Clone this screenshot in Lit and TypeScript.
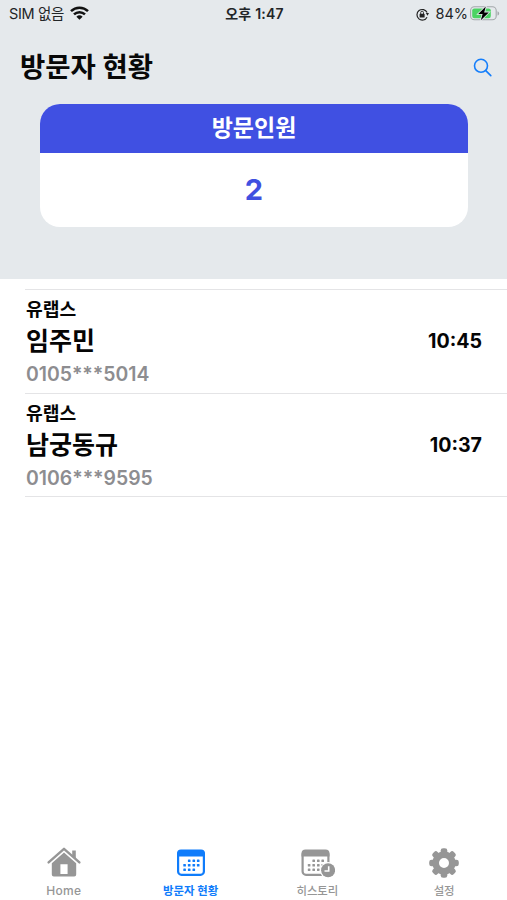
import { LitElement, html, css, svg } from "lit";
import { customElement, property } from "lit/decorators.js";

interface Visit {
  company: string;
  name: string;
  phone: string;
  time: string;
}

const visits: Visit[] = [
  { company: "유랩스", name: "임주민", phone: "0105***5014", time: "10:45" },
  { company: "유랩스", name: "남궁동규", phone: "0106***9595", time: "10:37" },
];

const dots = [
  [13.2, 13.8], [17.8, 13.8], [22.2, 13.8],
  [8.6, 18.3], [13.2, 18.3], [17.8, 18.3], [22.2, 18.3],
  [8.6, 22.8], [13.2, 22.8], [17.8, 22.8],
].map(([x, y]) => svg`<rect x=${x - 1.3} y=${y - 1.3} width="2.6" height="2.6" rx=".6" fill="currentColor"/>`);

const calendar = svg`
  <rect x="2.1" y="4" width="25.8" height="23.8" rx="3.4" fill="none" stroke="currentColor" stroke-width="2.2"/>
  <path d="M1 9.4V6.4a4 4 0 0 1 4-4h20a4 4 0 0 1 4 4v3z" fill="currentColor"/>
  ${dots}`;

const icons: Record<string, unknown> = {
  home: html`<svg width="36" height="32" viewBox="0 0 36 32">
    <path d="M26.2 3.4h3.6v9l-3.6-3z" fill="currentColor"/>
    <path d="M2.6 15.4 18 1.8 33.4 15.4" fill="none" stroke="currentColor" stroke-width="2.4" stroke-linecap="round" stroke-linejoin="round"/>
    <path fill-rule="evenodd" d="M18 5.4 5.8 16.2v11.4a2 2 0 0 0 2 2h20.4a2 2 0 0 0 2-2V16.2zM14.4 17.2h7.2v9.8h-7.2z" fill="currentColor"/>
  </svg>`,
  calendar: html`<svg width="30" height="32" viewBox="0 0 30 32">${calendar}</svg>`,
  history: html`<svg width="36" height="32" viewBox="-1.5 0 36 32">${calendar}
    <circle cx="27.6" cy="23.3" r="8.3" fill="#fff"/>
    <circle cx="27.6" cy="23.3" r="7" fill="currentColor"/>
    <path d="M28.2 19.2v4.8h-4.2" fill="none" stroke="#fff" stroke-width="1.6"/>
  </svg>`,
  gear: html`<svg width="32" height="32" viewBox="-16 -16 32 32">
    ${[0, 45, 90, 135, 180, 225, 270, 315].map(
      (a) => svg`<rect x="-3.3" y="-14.8" width="6.6" height="8" rx="2.4" fill="currentColor" transform="rotate(${a})"/>`,
    )}
    <circle r="8.3" fill="none" stroke="currentColor" stroke-width="6.6"/>
  </svg>`,
};

@customElement("status-bar")
class StatusBar extends LitElement {
  static styles = css`
    :host {
      display: grid;
      grid-template-columns: 1fr auto 1fr;
      height: 28px;
      padding: 0 7px 0 9px;
      line-height: 28px;
      font-size: 14.5px;
      color: #222527;
      white-space: nowrap;
    }
    .side { display: flex; align-items: center; }
    .carrier { letter-spacing: -0.35px; }
    .wifi { margin: -2px 0 0 6px; }
    .end { justify-content: flex-end; }
    .clock { font-weight: 600; font-size: 14px; letter-spacing: 0.2px; }
    .lock { margin-right: 6px; }
    .battery { margin: -1px 0 0 2px; }
    svg { display: block; }
  `;
  render() {
    return html`
      <div class="side">
        <span class="carrier">SIM 없음</span>
        <svg class="wifi" width="19" height="14" viewBox="0 0 19 14">
          <g fill="none" stroke="#111" stroke-width="2.5">
            <path d="M1 5.1a12.2 12.2 0 0 1 17 0"/>
            <path d="M4 8.4a7.9 7.9 0 0 1 11 0"/>
          </g>
          <path d="M6.4 10.7a4.5 4.5 0 0 1 6.2 0L9.5 13.8z" fill="#111"/>
        </svg>
      </div>
      <div class="clock">오후 1:47</div>
      <div class="side end">
        <svg class="lock" width="13" height="13" viewBox="0 0 13 13">
          <path d="M11.1 4.6A5.3 5.3 0 1 0 11 9.2" fill="none" stroke="#222" stroke-width="1.2"/>
          <path d="M9.8 5.1h3.2l-1.5 2.6z" fill="#222"/>
          <rect x="3.6" y="5.8" width="5" height="3.8" rx=".6" fill="#222"/>
          <path d="M4.7 6V4.6a1.4 1.4 0 0 1 2.8 0V6" fill="none" stroke="#222" stroke-width=".9"/>
        </svg>
        <span>84%</span>
        <svg class="battery" width="30" height="15" viewBox="0 0 30 15">
          <rect x=".6" y=".8" width="25.6" height="13" rx="3.8" fill="none" stroke="#a3a8aa" stroke-width="1.1"/>
          <path d="M27.5 5.2a2.3 2.3 0 0 1 0 4.4z" fill="#a3a8aa"/>
          <rect x="2.2" y="2.4" width="18.6" height="9.8" rx="2.2" fill="#4bd363"/>
          <path d="M15.8.6 8.2 8h4.4L10.8 14.2 18.8 6.4h-4.6z" fill="#000" stroke="#e6eaec" stroke-width="1.6" paint-order="stroke"/>
        </svg>
      </div>
    `;
  }
}

@customElement("visit-row")
class VisitRow extends LitElement {
  @property({ attribute: false }) visit!: Visit;
  static styles = css`
    :host {
      display: flex;
      align-items: center;
      box-sizing: border-box;
      height: 103.7px;
      margin-left: 25px;
      padding-right: 25px;
      border-bottom: 1px solid #e4e4e6;
      color: #050505;
      font-weight: 700;
    }
    .who { flex: 1; padding: 1px 0 0 1px; }
    .company { font-size: 18.2px; line-height: 26px; }
    .name { font-size: 25px; line-height: 38px; }
    .phone {
      font-size: 19.4px;
      line-height: 28px;
      font-weight: 600;
      color: #8d8d90;
      font-feature-settings: "calt" 0;
    }
    .time { font-size: 19.6px; font-weight: 700; }
  `;
  render() {
    const v = this.visit;
    return html`
      <div class="who">
        <div class="company">${v.company}</div>
        <div class="name">${v.name}</div>
        <div class="phone">${v.phone}</div>
      </div>
      <div class="time">${v.time}</div>
    `;
  }
}

@customElement("tab-item")
class TabItem extends LitElement {
  @property() icon = "";
  @property() label = "";
  @property({ type: Boolean, reflect: true }) active = false;
  static styles = css`
    :host {
      display: flex;
      flex-direction: column;
      align-items: center;
      color: #969696;
      font-size: 11.4px;
      font-weight: 500;
      padding-left: 1px;
    }
    :host([active]) { color: #0f7cfb; font-weight: 700; }
    .label { line-height: 20px; margin-top: 2px; }
    .home { font-size: 12px; letter-spacing: 0.3px; }
    svg { display: block; }
  `;
  render() {
    return html`${icons[this.icon]}<span class="label ${this.icon}">${this.label}</span>`;
  }
}

@customElement("app-root")
class AppRoot extends LitElement {
  static styles = css`
    :host {
      display: flex;
      flex-direction: column;
      height: 900px;
      background: #fff;
      font-family: Inter, "Noto Sans CJK KR", sans-serif;
      overflow: hidden;
    }
    .top { height: 279px; background: #e5e9ec; }
    .bar {
      display: flex;
      align-items: center;
      justify-content: space-between;
      box-sizing: border-box;
      height: 76px;
      padding: 2px 15px 0 20px;
    }
    .title { margin: 0; font-size: 27.5px; font-weight: 700; line-height: 74px; color: #080808; }
    .card {
      height: 123px;
      margin: 0 39px 0 40px;
      border-radius: 20px;
      overflow: hidden;
      background: #fff;
      text-align: center;
      color: #4050e0;
    }
    .card-head {
      height: 49px;
      line-height: 49px;
      background: #4050e2;
      color: #fff;
      font-size: 23px;
      font-weight: 700;
    }
    .count { font-size: 29px; font-weight: 700; line-height: 74px; }
    .list { flex: 1; margin-top: 10px; }
    .rule { height: 1px; margin-left: 25px; background: #e4e4e6; }
    .tabs { display: grid; grid-template-columns: repeat(4, 1fr); height: 53px; }
  `;
  render() {
    return html`
      <header class="top">
        <status-bar></status-bar>
        <div class="bar">
          <h1 class="title">방문자 현황</h1>
          <svg width="19" height="19" viewBox="0 0 19 19" fill="none" stroke="#147efb" stroke-width="1.6" stroke-linecap="round">
            <circle cx="8" cy="7.8" r="6.5"/>
            <path d="m12.8 12.6 5 5"/>
          </svg>
        </div>
        <section class="card">
          <div class="card-head">방문인원</div>
          <div class="count">2</div>
        </section>
      </header>
      <main class="list">
        <div class="rule"></div>
        ${visits.map((v) => html`<visit-row .visit=${v}></visit-row>`)}
      </main>
      <nav class="tabs">
        <tab-item icon="home" label="Home"></tab-item>
        <tab-item icon="calendar" label="방문자 현황" active></tab-item>
        <tab-item icon="history" label="히스토리"></tab-item>
        <tab-item icon="gear" label="설정"></tab-item>
      </nav>
    `;
  }
}
